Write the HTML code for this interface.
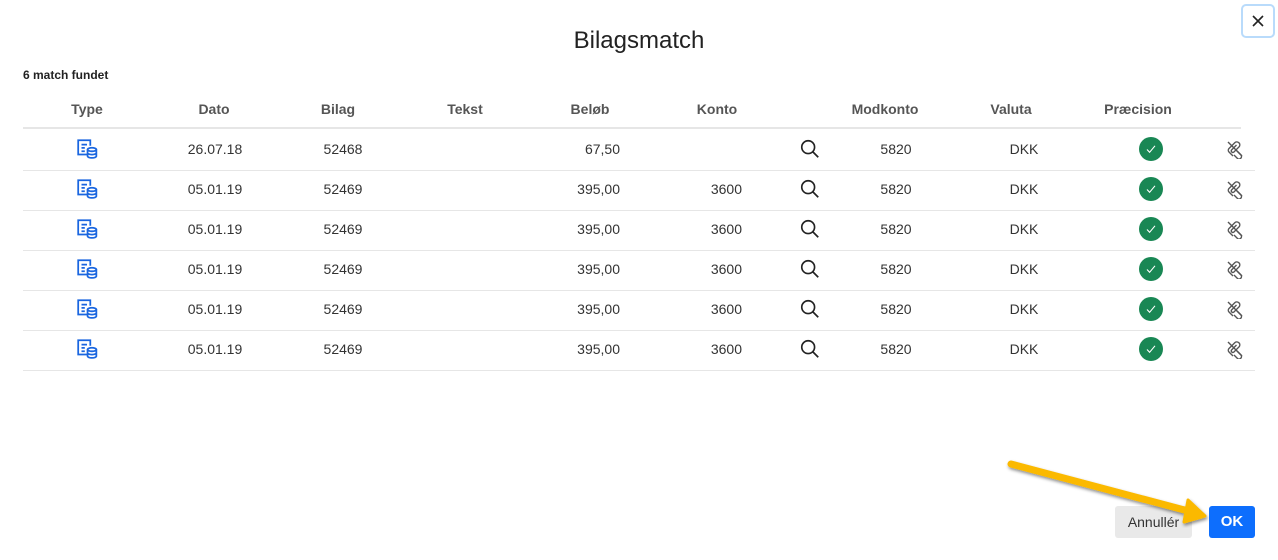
<!DOCTYPE html>
<html><head><meta charset="utf-8"><style>
body{margin:0;width:1278px;height:560px;background:#fff;font-family:"Liberation Sans",Arial,sans-serif;position:relative;overflow:hidden;color:#333}
.a{position:absolute;white-space:nowrap}
h1{position:absolute;top:27px;left:0;width:1278px;text-align:center;margin:0;font-weight:normal;font-size:24px;color:#222}
.close{position:absolute;left:1241px;top:4px;width:30px;height:30px;border:2px solid #b9dbfb;border-radius:5px;box-sizing:content-box}
.hd{font-weight:bold;font-size:14px;color:#555;top:101px}
.row{position:absolute;left:23px;width:1232px;height:40px;border-bottom:1px solid #e6e6e6}
.row span{position:absolute;top:11px;font-size:14px;color:#333}
.c{transform:translateX(-50%)}
.r{transform:translateX(-100%)}
.btn{position:absolute;top:506px;height:32px;border-radius:3px;font-size:14px;line-height:32px;text-align:center}
</style></head><body>
<svg width="0" height="0" style="position:absolute">
<defs>
<symbol id="ty" viewBox="0 0 20 20"><g fill="none" stroke="#1a66e0" stroke-width="1.6"><path d="M10 15H2V2h11v5"/><path d="M5 6h5M5 9h3M5 12h3"/><ellipse cx="14.5" cy="10.5" rx="4" ry="1.6"/><path d="M10.5 10.5v6c0 .9 1.8 1.6 4 1.6s4-.7 4-1.6v-6M10.5 13.5c0 .9 1.8 1.6 4 1.6s4-.7 4-1.6"/></g></symbol>
<symbol id="sr" viewBox="0 0 24 24"><g fill="none" stroke="#222" stroke-width="1.8"><circle cx="10" cy="10" r="7"/><path d="M15 15l6 6"/></g></symbol>
<symbol id="ok" viewBox="0 0 24 24"><circle cx="12" cy="12" r="12" fill="#198754"/><path d="M8 12.5l2.6 2.8 5.4-6.5" fill="none" stroke="#fff" stroke-width="1.1"/></symbol>
<symbol id="ln" viewBox="0 0 20 20"><g fill="none" stroke="#555" stroke-width="1.4"><path d="M8 17l-4-4a2.5 2.5 0 0 1 0-3.5l6-6a3 3 0 0 1 4.2 4.2l-5.5 5.5a1.6 1.6 0 0 1-2.2-2.2l5-5"/><path d="M12 12l4 4a2.5 2.5 0 0 1-3.5 3.5L9 16"/><path d="M3 3l14 14"/></g></symbol>
</defs></svg>
<h1>Bilagsmatch</h1>
<div class="close"><svg width="30" height="30" viewBox="0 0 30 30"><path d="M10 10l10 10M20 10L10 20" stroke="#222" stroke-width="1.6"/></svg></div>
<div class="a" style="left:23px;top:68px;font-size:12px;font-weight:bold;color:#222">6 match fundet</div>
<div class="a hd c" style="left:87px">Type</div>
<div class="a hd c" style="left:214px">Dato</div>
<div class="a hd c" style="left:338px">Bilag</div>
<div class="a hd c" style="left:465px">Tekst</div>
<div class="a hd c" style="left:590px">Beløb</div>
<div class="a hd c" style="left:717px">Konto</div>
<div class="a hd c" style="left:885px">Modkonto</div>
<div class="a hd c" style="left:1011px">Valuta</div>
<div class="a hd c" style="left:1138px">Præcision</div>
<div class="a" style="left:23px;top:127px;width:1218px;height:2px;background:#e6e6e6"></div>

<div class="row" style="top:130px"><svg class="a" style="left:53px;top:8px" width="22" height="22"><use href="#ty"/></svg><span class="c" style="left:192px">26.07.18</span><span class="c" style="left:320px">52468</span><span class="r" style="left:597px">67,50</span><svg class="a" style="left:776px;top:8px" width="22" height="22"><use href="#sr"/></svg><span class="c" style="left:873px">5820</span><span class="c" style="left:1001px">DKK</span><svg class="a" style="left:1116px;top:7px" width="24" height="24"><use href="#ok"/></svg><svg class="a" style="left:1202px;top:9px" width="20" height="20"><use href="#ln"/></svg></div>
<div class="row" style="top:170px"><svg class="a" style="left:53px;top:8px" width="22" height="22"><use href="#ty"/></svg><span class="c" style="left:192px">05.01.19</span><span class="c" style="left:320px">52469</span><span class="r" style="left:597px">395,00</span><span class="r" style="left:719px">3600</span><svg class="a" style="left:776px;top:8px" width="22" height="22"><use href="#sr"/></svg><span class="c" style="left:873px">5820</span><span class="c" style="left:1001px">DKK</span><svg class="a" style="left:1116px;top:7px" width="24" height="24"><use href="#ok"/></svg><svg class="a" style="left:1202px;top:9px" width="20" height="20"><use href="#ln"/></svg></div>
<div class="row" style="top:210px"><svg class="a" style="left:53px;top:8px" width="22" height="22"><use href="#ty"/></svg><span class="c" style="left:192px">05.01.19</span><span class="c" style="left:320px">52469</span><span class="r" style="left:597px">395,00</span><span class="r" style="left:719px">3600</span><svg class="a" style="left:776px;top:8px" width="22" height="22"><use href="#sr"/></svg><span class="c" style="left:873px">5820</span><span class="c" style="left:1001px">DKK</span><svg class="a" style="left:1116px;top:7px" width="24" height="24"><use href="#ok"/></svg><svg class="a" style="left:1202px;top:9px" width="20" height="20"><use href="#ln"/></svg></div>
<div class="row" style="top:250px"><svg class="a" style="left:53px;top:8px" width="22" height="22"><use href="#ty"/></svg><span class="c" style="left:192px">05.01.19</span><span class="c" style="left:320px">52469</span><span class="r" style="left:597px">395,00</span><span class="r" style="left:719px">3600</span><svg class="a" style="left:776px;top:8px" width="22" height="22"><use href="#sr"/></svg><span class="c" style="left:873px">5820</span><span class="c" style="left:1001px">DKK</span><svg class="a" style="left:1116px;top:7px" width="24" height="24"><use href="#ok"/></svg><svg class="a" style="left:1202px;top:9px" width="20" height="20"><use href="#ln"/></svg></div>
<div class="row" style="top:290px"><svg class="a" style="left:53px;top:8px" width="22" height="22"><use href="#ty"/></svg><span class="c" style="left:192px">05.01.19</span><span class="c" style="left:320px">52469</span><span class="r" style="left:597px">395,00</span><span class="r" style="left:719px">3600</span><svg class="a" style="left:776px;top:8px" width="22" height="22"><use href="#sr"/></svg><span class="c" style="left:873px">5820</span><span class="c" style="left:1001px">DKK</span><svg class="a" style="left:1116px;top:7px" width="24" height="24"><use href="#ok"/></svg><svg class="a" style="left:1202px;top:9px" width="20" height="20"><use href="#ln"/></svg></div>
<div class="row" style="top:330px"><svg class="a" style="left:53px;top:8px" width="22" height="22"><use href="#ty"/></svg><span class="c" style="left:192px">05.01.19</span><span class="c" style="left:320px">52469</span><span class="r" style="left:597px">395,00</span><span class="r" style="left:719px">3600</span><svg class="a" style="left:776px;top:8px" width="22" height="22"><use href="#sr"/></svg><span class="c" style="left:873px">5820</span><span class="c" style="left:1001px">DKK</span><svg class="a" style="left:1116px;top:7px" width="24" height="24"><use href="#ok"/></svg><svg class="a" style="left:1202px;top:9px" width="20" height="20"><use href="#ln"/></svg></div>

<div class="btn" style="left:1115px;width:77px;background:#e9e9e9;color:#333">Annullér</div>
<div class="btn" style="left:1209px;width:46px;background:#0d6efd;color:#fff;font-size:15px;font-weight:bold">OK</div>
<svg class="a" style="left:0;top:0" width="1278" height="560">
<defs><filter id="sh"><feDropShadow dx="1" dy="2" stdDeviation="1.5" flood-color="#000" flood-opacity="0.45"/></filter></defs>
<g filter="url(#sh)"><path d="M1011 464L1192 512" stroke="#fbb900" stroke-width="7" stroke-linecap="round"/><path d="M1188 500L1205 516L1184 522Z" fill="#fbb900" stroke="#fbb900" stroke-width="3" stroke-linejoin="round"/></g>
</svg>
</body></html>
